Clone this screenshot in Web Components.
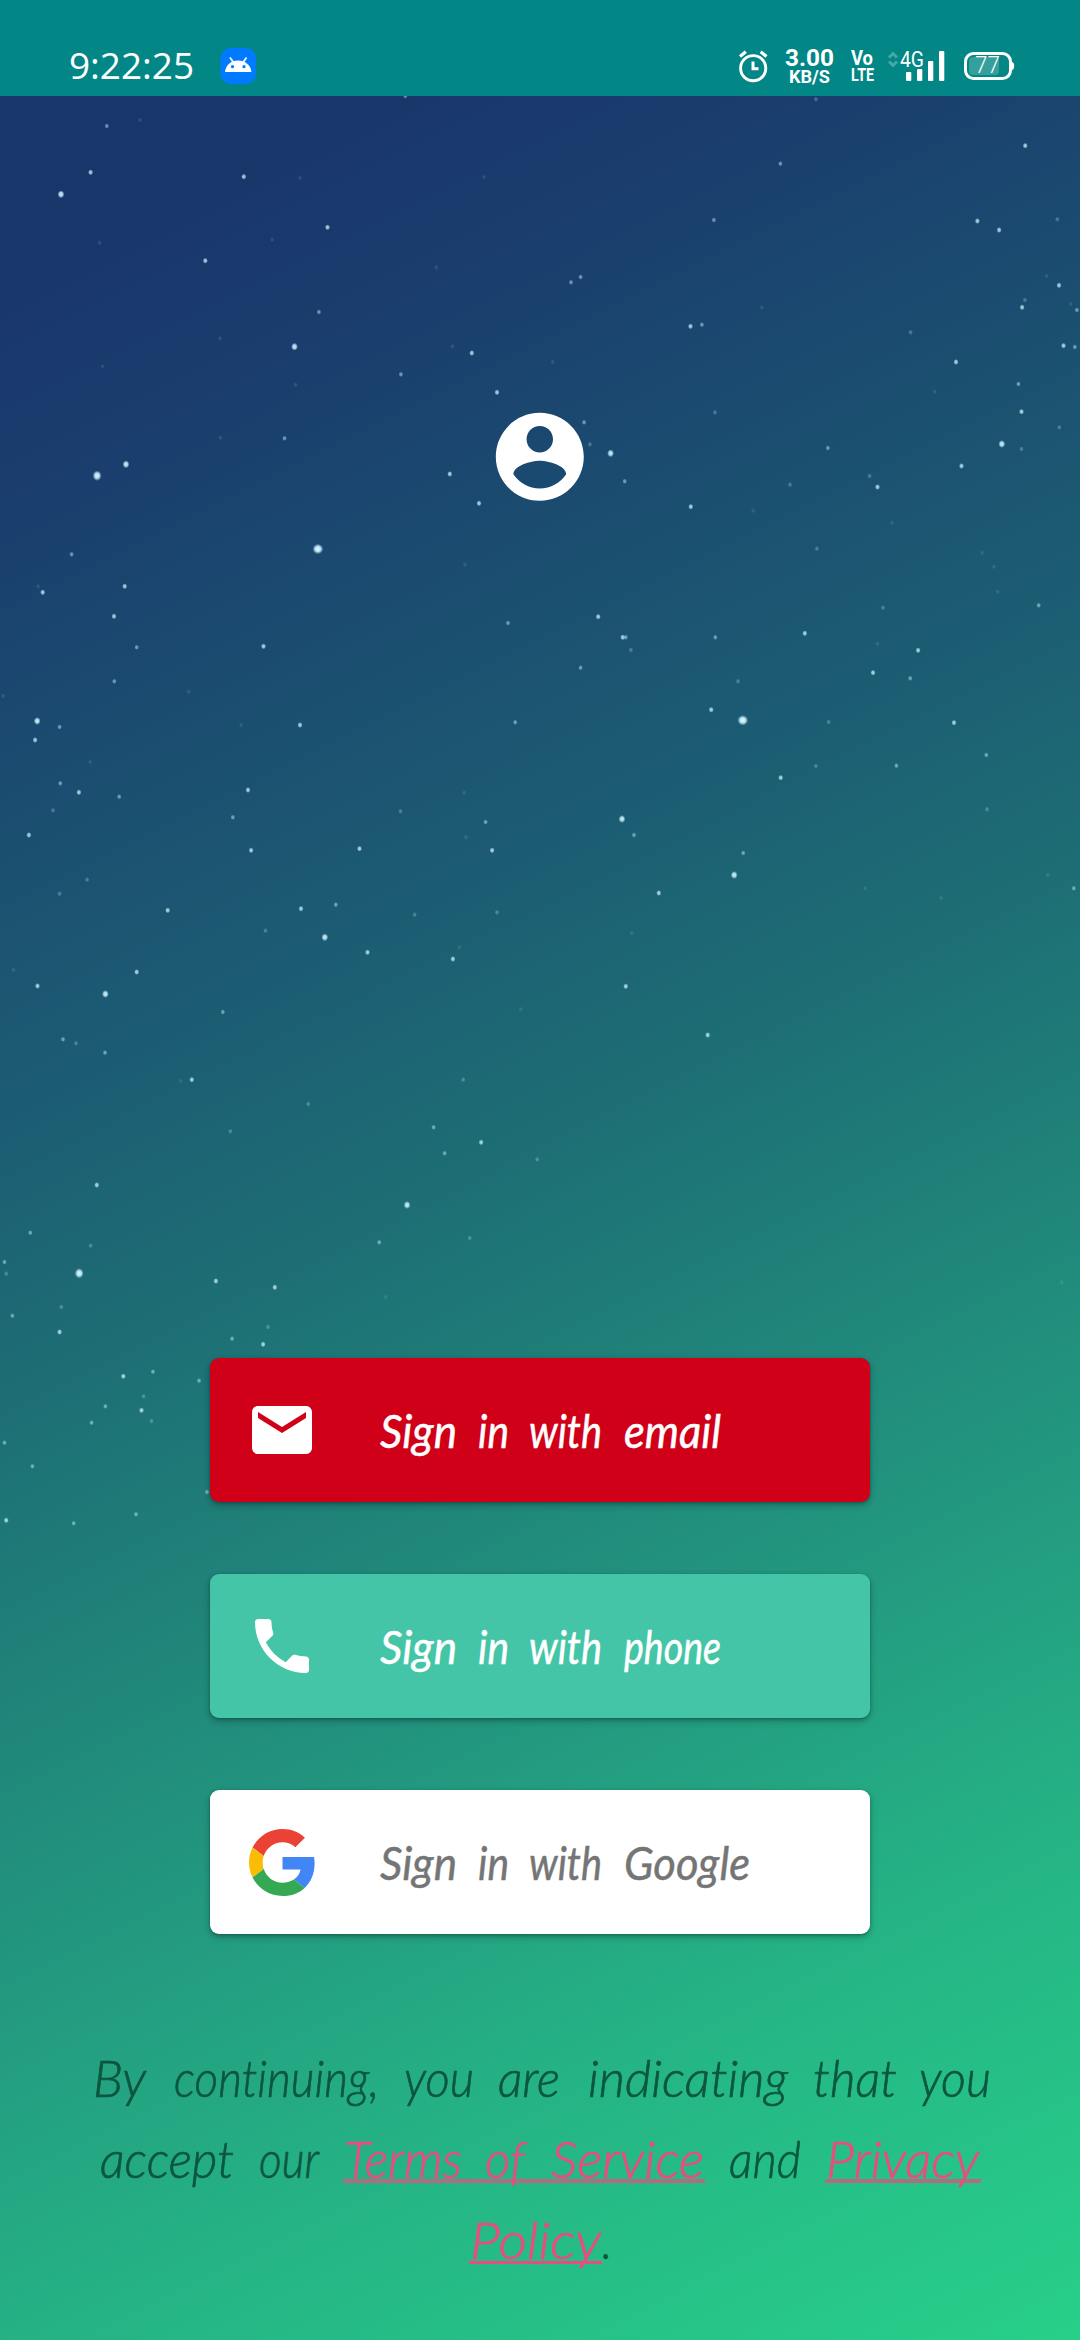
<!DOCTYPE html>
<html lang="en">
<head>
<meta charset="utf-8">
<title>Sign in</title>
<style>
html,body{margin:0;padding:0;width:1080px;height:2340px;overflow:hidden}
</style>
</head>
<body>
<login-screen></login-screen>
<script>
const define=(name,html,setup)=>customElements.define(name,class extends HTMLElement{
  connectedCallback(){
    if(this.shadowRoot)return;
    const t=document.createElement('template');
    t.innerHTML=html;
    this.attachShadow({mode:'open'}).append(t.content.cloneNode(true));
    if(setup)setup.call(this,this.shadowRoot);
  }
});

/* One word squeezed or stretched to an exact width; "gap" is the space before it. */
define('fit-text',`<style>
:host{display:block;flex:none;white-space:pre;font-variant-ligatures:none}
span{display:inline-block;transform-origin:0 50%}
</style><span><slot></slot></span>`,function(root){
  const w=+this.getAttribute('w'),s=root.querySelector('span');
  this.style.width=w+'px';
  this.style.marginLeft=(this.getAttribute('gap')||0)+'px';
  s.style.transform='scaleX('+w/s.getBoundingClientRect().width+')';
});

/* Stars: each patch of sky is [left, top, "x,y,magnitude ..."]. */
const SKY=[
[0,90,"1177,18,3 310,108,3 407,90,1 263,247,4 177,313,5 708,260,4 871,264,1 1406,261,1 951,412,4 289,458,1 790,449,1 596,512,4 1267,532,1 926,666,3 639,745,1 855,770,5 1314,769,1 1370,789,4 1164,853,3 1443,907,4 858,884,1 640,1043,1 826,1045,3 366,1123,5 282,1157,6 1306,1152,4 1391,1240,4 923,1377,7 208,1393,3 362,1489,4 1350,1424,1 111,1489,1 298,829,1"],
[540,90,"801,28,2 1409,167,4 698,221,3 505,390,3 1270,393,4 1333,420,4 1502,388,2 90,577,3 118,561,3 1471,558,1 1507,586,4 1408,630,2 1400,652,4 1541,642,1 1559,660,3 437,709,4 470,704,3 644,653,1 1076,727,2 1520,767,4 1553,771,3 1208,816,4 37,816,1 1389,882,3 1146,905,1 1398,965,4 508,967,2 128,997,3 145,1063,2 205,1090,5 1508,1012,2 1341,1062,5 836,1074,3 1398,1077,2 1224,1128,4 957,1158,2 980,1191,4 246,1174,3 726,1184,2 438,1250,4 619,1262,1 804,1376,2 1284,1388,1 1318,1430,1 1022,1298,1"],
[0,590,"124,7,4 331,79,4 397,172,3 765,169,4 332,274,3 548,305,1 9,318,1 1475,99,3 108,393,5 173,411,3 102,450,4 700,405,1 871,405,4 1496,397,3 262,516,1 175,580,3 229,607,4 346,620,3 720,600,4 154,661,2 676,682,3 84,735,4 729,781,4 1044,776,4 1163,664,2 1410,696,3 1353,742,1 1429,781,4 253,869,2 173,911,2 487,961,4 874,956,4 975,944,3 1204,974,2 1443,967,2 771,1022,2 943,1042,5 1067,1087,4 1315,1107,4 1334,1072,1 397,1146,4 39,1139,1 109,1188,4 306,1212,5 647,1266,3 1512,1258,1 183,1348,3 221,1360,2 305,1388,3 557,1469,4 1345,1469,2 525,1473,1 1348,608,1"],
[540,590,"169,80,4 240,142,4 249,142,3 264,180,2 118,233,3 509,142,3 769,130,4 996,53,2 1329,5,1 1448,46,3 980,161,1 1098,181,4 575,274,2 967,248,4 1075,265,3 497,359,4 589,391,7 838,396,2 1202,398,4 1296,495,3 801,528,2 1035,527,3 699,563,4 1298,658,2 238,687,5 273,735,3 590,789,3 564,855,5 345,909,4 1474,855,1 944,895,1 1550,895,3 1165,924,1 266,1029,1 249,1189,4 487,1335,4"],
[0,1090,"895,42,2 669,124,2 1259,112,3 1397,157,4 1291,190,3 1560,208,2 281,285,4 1182,345,5 88,428,3 263,467,2 1101,457,3 1364,444,2 13,516,3 18,551,2 230,550,6 627,573,4 798,592,4 1120,621,1 178,651,2 36,677,3 173,726,4 778,711,2 674,746,3 764,763,4 358,859,4 444,845,3 578,872,3 417,919,2 411,961,4 306,949,3 440,993,2 266,998,3 13,1058,3 94,1129,3 601,1206,3 18,1291,4 395,1273,3 214,1300,3"],
[540,1090,"517,817,3 1515,577,1"]
];
const MAG=[0,[1.9,.12],[2,.27],[2,.48],[2.2,.75],[2.9,.9],[3.8,.97],[4.6,1]];
define('night-sky',`<style>
:host{display:block;background:linear-gradient(153.4deg,#18366b 0,#19366b 7%,#1a3e6e 15%,#1b4f70 27%,#1c5c73 36.5%,#1d6c74 46%,#1f7e78 55%,#239a80 69%,#25b485 82%,#27d089 100%)}
svg{display:block;width:1080px;height:2244px}
</style><svg viewBox="0 96 1080 2244"><defs>
<radialGradient id="s"><stop offset="0" stop-color="#e4fbff"/><stop offset=".5" stop-color="#ccf4ff" stop-opacity=".9"/><stop offset="1" stop-color="#9fd8f5" stop-opacity="0"/></radialGradient>
</defs><g fill="url(#s)"></g></svg>`,function(root){
  let out='';
  for(const [ox,oy,pts] of SKY)for(const p of pts.split(' ')){
    const [x,y,m]=p.split(',').map(Number),[r,o]=MAG[m];
    out+='<ellipse cx="'+(ox+x*540/1568).toFixed(1)+'" cy="'+(oy+y/3).toFixed(1)+'" rx="'+r*1.2+'" ry="'+r*(m>6?1:1.2)*1.15+'" opacity="'+o+'"/>';
  }
  root.querySelector('g').innerHTML=out;
});

define('status-bar',`<style>
:host{display:flex;align-items:flex-start;box-sizing:border-box;width:1080px;height:96px;background:#028786;color:#fff;font-family:Roboto,sans-serif;padding-left:69px}
.time{font:400 37px/37px "Open Sans",sans-serif;margin-top:46px}
svg{display:block;flex:none}
.app{margin:48px 0 0 26px}
.alarm{margin:50px 0 0 482px}
.net{margin:46px 0 0 14px;width:50px;display:flex;flex-direction:column;align-items:center;font-weight:700}
.net .a{font-size:24px;line-height:24px}.net .b{font-size:18px;line-height:18px;margin-top:-2px}
.volte{margin:48px 0 0 16px;font-weight:700;width:24px;display:flex;flex-direction:column;align-items:center}
.volte .a{font-size:20px;line-height:20px}.volte .b{font-size:19px;line-height:19px;margin-top:-3px}
.sig{margin:50px 0 0 14px;display:grid;width:60px}
.sig>*{grid-area:1/1}
.sig fit-text{font-size:22px;line-height:21px;margin-top:-1px}
.bat{margin:50px 0 0 15px;display:grid}
.bat>*{grid-area:1/1}
.bat fit-text{font:300 23px/22px Roboto,sans-serif;margin-top:5px}
</style>
<fit-text class="time" w="125">9:22:25</fit-text>
<svg class="app" width="37" height="36" viewBox="0 0 37 36"><rect x=".5" width="35.5" height="36" rx="10" fill="#007bff"/><path d="M5 24C5.700 17 11 12.500 18 12.500S30.800 17 31.500 24Z" fill="#fff"/><path d="M10 9.500l3.500 5M26.500 9.500l-3.500 5" stroke="#fff" stroke-width="1.800"/><circle cx="12.500" cy="18.700" r="1.600" fill="#007bff"/><circle cx="24" cy="18.700" r="1.600" fill="#007bff"/></svg>
<svg class="alarm" width="31" height="33" viewBox="0 0 31 33" fill="none" stroke="#fff"><circle cx="14.200" cy="18.200" r="12.600" stroke-width="2.900"/><path d="M14 11.500v7.300h5.500" stroke-width="3"/><path d="M1 6.500l5.800-4.700M27.500 6.500l-5.800-4.700" stroke-width="3.200"/></svg>
<div class="net"><fit-text class="a" w="49">3.00</fit-text><fit-text class="b" w="41">KB/S</fit-text></div>
<div class="volte"><fit-text class="a" w="22">Vo</fit-text><fit-text class="b" w="23">LTE</fit-text></div>
<div class="sig"><svg width="60" height="32" viewBox="0 0 60 32"><path d="M1 7.500l4-4 4 4M1 11.500l4 4 4-4" fill="none" stroke="#44a9a5" stroke-width="3"/><g fill="#fff"><rect x="18" y="22" width="5.300" height="9" rx="1"/><rect x="29" y="19" width="5.300" height="12" rx="1"/><rect x="40" y="11" width="5.300" height="20" rx="1"/><rect x="51" y="1" width="5.300" height="30" rx="1"/></g></svg><fit-text gap="12" w="24">4G</fit-text></div>
<div class="bat"><svg width="52" height="32" viewBox="0 0 52 32"><rect x="2.500" y="3.500" width="45" height="25" rx="8" fill="none" stroke="#fff" stroke-width="3"/><rect x="6" y="7" width="30" height="18" rx="4" fill="#35a09b"/><path d="M48 11.500q3.200.5 3.200 4.500T48 20.500z" fill="#fff"/></svg><fit-text gap="12" w="25">77</fit-text></div>`);

define('account-badge',`<style>:host{display:block;width:106px;height:106px}svg{display:block}</style>
<svg width="105.600" height="105.600" viewBox="0 0 24 24" fill="#fff"><path d="M12 2C6.480 2 2 6.480 2 12s4.480 10 10 10 10-4.480 10-10S17.520 2 12 2zm0 3c1.660 0 3 1.340 3 3s-1.340 3-3 3-3-1.340-3-3 1.340-3 3-3zm0 14.200c-2.500 0-4.710-1.280-6-3.220.03-1.990 4-3.080 6-3.080 1.990 0 5.970 1.090 6 3.080-1.290 1.940-3.500 3.220-6 3.220z"/></svg>`);

define('sign-in-button',`<style>
:host{display:flex;align-items:center;box-sizing:border-box;width:660px;height:144px;border-radius:9px;background:var(--fill);color:var(--ink,#fff);box-shadow:0 3px 7px rgba(0,0,0,.27),0 1px 3px rgba(0,0,0,.2);padding-left:36px}
.icon{display:flex;width:72px;height:72px;align-items:center;justify-content:center}
.label{display:flex;margin-left:62px;padding-top:2px;font:italic 400 46px/56px Lato,sans-serif;-webkit-text-stroke:.5px currentColor}
</style><div class="icon"><slot name="icon"></slot></div><div class="label"><slot></slot></div>`);

define('legal-note',`<style>
:host{display:flex;flex-direction:column;width:1080px;font:italic 300 51px/81px Lato,sans-serif;color:#0c563f;-webkit-text-stroke:.7px currentColor}
.line{display:flex;height:81px}
.l1{margin-left:93px}.l2{margin-left:100px}.l3{margin-left:469px}
a{display:flex;color:#e94d80;background:linear-gradient(#e94d80,#e94d80) 0 62px/100% 3px no-repeat}
a.soft{background:linear-gradient(#b16c80,#b16c80) 0 61.500px/100% 4px no-repeat}
</style>
<div class="line l1"><fit-text w="53">By</fit-text> <fit-text gap="28" w="205">continuing,</fit-text> <fit-text gap="25" w="70">you</fit-text> <fit-text gap="24" w="62">are</fit-text> <fit-text gap="28" w="200">indicating</fit-text> <fit-text gap="25" w="84">that</fit-text> <fit-text gap="22" w="72">you</fit-text></div>
<div class="line l2"><fit-text w="134">accept</fit-text> <fit-text gap="25" w="60">our</fit-text> <a class="soft" style="margin-left:24px;width:362px"><fit-text gap="1" w="118">Terms</fit-text> <fit-text gap="23" w="40">of</fit-text> <fit-text gap="26" w="153">Service</fit-text></a> <fit-text gap="24" w="72">and</fit-text> <a class="soft" style="margin-left:24px;width:156px"><fit-text gap="1" w="153">Privacy</fit-text></a></div>
<div class="line l3"><a style="width:133px"><fit-text gap="1" w="131">Policy</fit-text></a><fit-text gap="0" w="10">.</fit-text></div>`);

define('login-screen',`<style>
:host{display:grid;grid-template-rows:96px 2244px;width:1080px}
night-sky{grid-area:2/1}
main{grid-area:2/1;display:flex;flex-direction:column;align-items:center;padding-top:307.500px;position:relative}
.buttons{display:flex;flex-direction:column;gap:72px;margin-top:848.500px}
legal-note{margin-top:102.500px}
svg{display:block}
</style>
<status-bar></status-bar><night-sky></night-sky>
<main>
<account-badge></account-badge>
<div class="buttons">
<sign-in-button style="--fill:#d00019"><svg slot="icon" width="72" height="72" viewBox="0 0 24 24" fill="#fff"><path d="M20 4H4c-1.100 0-1.990.9-1.990 2L2 18c0 1.100.9 2 2 2h16c1.100 0 2-.9 2-2V6c0-1.100-.9-2-2-2zm0 4l-8 5-8-5V6l8 5 8-5v2z"/></svg><fit-text w="77">Sign</fit-text> <fit-text gap="21" w="31">in</fit-text> <fit-text gap="20" w="73">with</fit-text> <fit-text gap="22" w="97">email</fit-text></sign-in-button>
<sign-in-button style="--fill:#45c5a7"><svg slot="icon" width="72" height="72" viewBox="0 0 24 24" fill="#fff"><path d="M6.620 10.790c1.440 2.830 3.760 5.140 6.590 6.590l2.200-2.200c.27-.27.67-.36 1.020-.24 1.120.37 2.330.57 3.570.57.55 0 1 .45 1 1V20c0 .55-.45 1-1 1-9.390 0-17-7.610-17-17 0-.55.45-1 1-1h3.500c.55 0 1 .45 1 1 0 1.250.2 2.450.57 3.570.11.35.03.74-.25 1.020l-2.200 2.200z"/></svg><fit-text w="77">Sign</fit-text> <fit-text gap="21" w="31">in</fit-text> <fit-text gap="20" w="73">with</fit-text> <fit-text gap="22" w="97">phone</fit-text></sign-in-button>
<sign-in-button style="--fill:#fff;--ink:#757575"><svg slot="icon" width="67" height="67" viewBox="0 0 48 48"><path fill="#EA4335" d="M24 9.500c3.540 0 6.710 1.220 9.210 3.600l6.850-6.850C35.900 2.380 30.470 0 24 0 14.620 0 6.510 5.380 2.560 13.220l7.980 6.190C12.430 13.720 17.740 9.500 24 9.500z"/><path fill="#4285F4" d="M46.980 24.550c0-1.570-.15-3.090-.38-4.550H24v9.020h12.940c-.58 2.960-2.260 5.480-4.780 7.180l7.730 6c4.510-4.180 7.090-10.360 7.090-17.650z"/><path fill="#FBBC05" d="M10.530 28.590c-.48-1.450-.76-2.990-.76-4.590s.27-3.140.76-4.590l-7.980-6.190C.92 16.460 0 20.120 0 24c0 3.880.92 7.540 2.560 10.780l7.970-6.190z"/><path fill="#34A853" d="M24 48c6.480 0 11.930-2.130 15.890-5.810l-7.730-6c-2.150 1.450-4.920 2.300-8.160 2.300-6.260 0-11.570-4.220-13.470-9.910l-7.980 6.190C6.510 42.620 14.620 48 24 48z"/></svg><fit-text w="77">Sign</fit-text> <fit-text gap="21" w="31">in</fit-text> <fit-text gap="20" w="73">with</fit-text> <fit-text gap="22" w="126">Google</fit-text></sign-in-button>
</div>
<legal-note></legal-note>
</main>`);
</script>
</body>
</html>
